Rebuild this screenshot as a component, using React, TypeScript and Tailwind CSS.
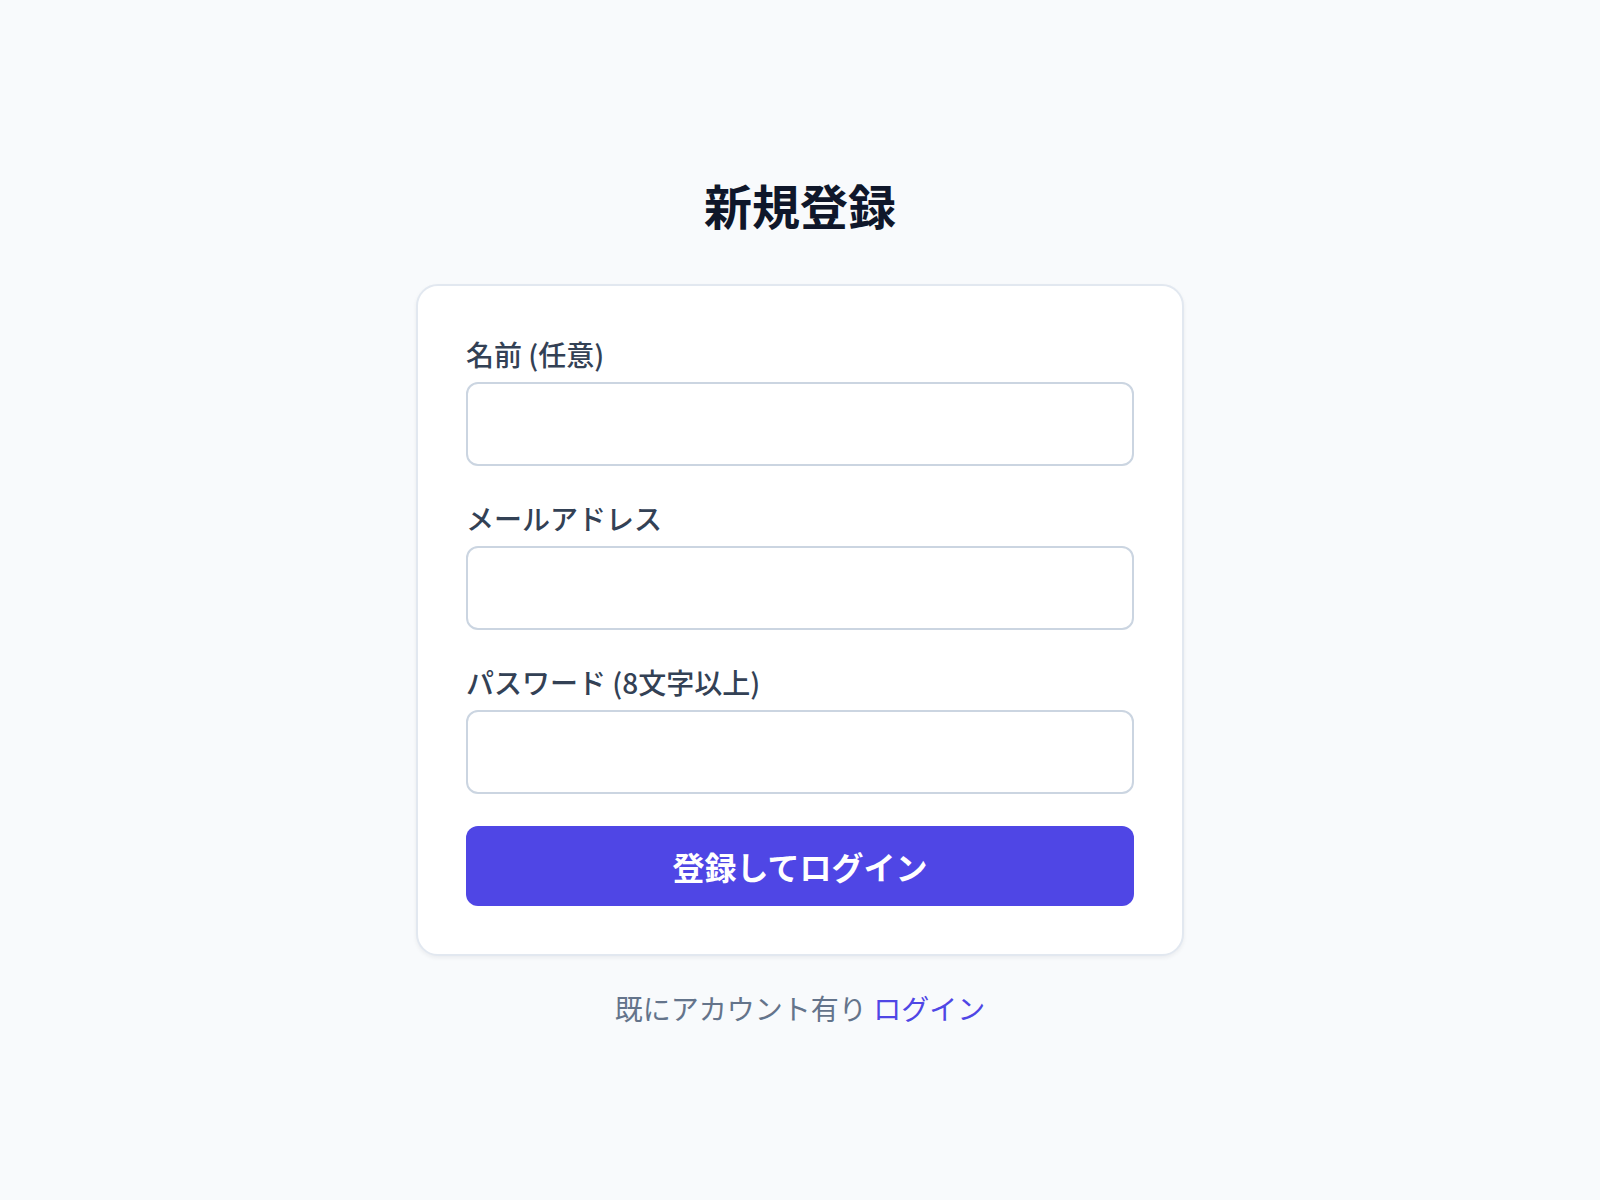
import React, { useState } from "react";

const fontStack = {
  fontFamily: '"Noto Sans CJK JP", "Noto Sans", sans-serif',
};

function Field({
  label,
  type,
  value,
  onChange,
}: {
  label: string;
  type: string;
  value: string;
  onChange: (v: string) => void;
}) {
  return (
    <div className="flex flex-col">
      <label className="mb-2 text-[28px] font-medium leading-[40px] text-[#334155]">{label}</label>
      <input
        type={type}
        value={value}
        onChange={(e) => onChange(e.target.value)}
        className="h-[84px] w-full rounded-[12px] border-2 border-[#cbd5e1] bg-white px-6 text-[28px] text-[#0f172a] outline-none"
      />
    </div>
  );
}

export default function App() {
  const [name, setName] = useState("");
  const [email, setEmail] = useState("");
  const [password, setPassword] = useState("");

  return (
    <div
      className="flex min-h-screen flex-col items-center justify-center bg-[#f8fafc]"
      style={fontStack}
    >
      <h1 className="mb-12 text-[48px] font-bold leading-[64px] text-[#0f172a]">新規登録</h1>

      <form
        onSubmit={(e) => e.preventDefault()}
        className="flex w-[768px] flex-col gap-8 rounded-[22px] border-2 border-[#e2e8f0] bg-white p-12 shadow-[0_2px_4px_rgba(15,23,42,0.06)]"
      >
        <Field label="名前 (任意)" type="text" value={name} onChange={setName} />
        <Field label="メールアドレス" type="email" value={email} onChange={setEmail} />
        <Field label="パスワード (8文字以上)" type="password" value={password} onChange={setPassword} />
        <button
          type="submit"
          className="h-[80px] w-full rounded-[12px] bg-[#4f46e5] text-[32px] font-semibold text-white"
        >
          登録してログイン
        </button>
      </form>

      <p className="mt-8 text-[28px] leading-[40px] text-[#64748b]">
        既にアカウント有り <a href="#" className="text-[#4f46e5]">ログイン</a>
      </p>
    </div>
  );
}
